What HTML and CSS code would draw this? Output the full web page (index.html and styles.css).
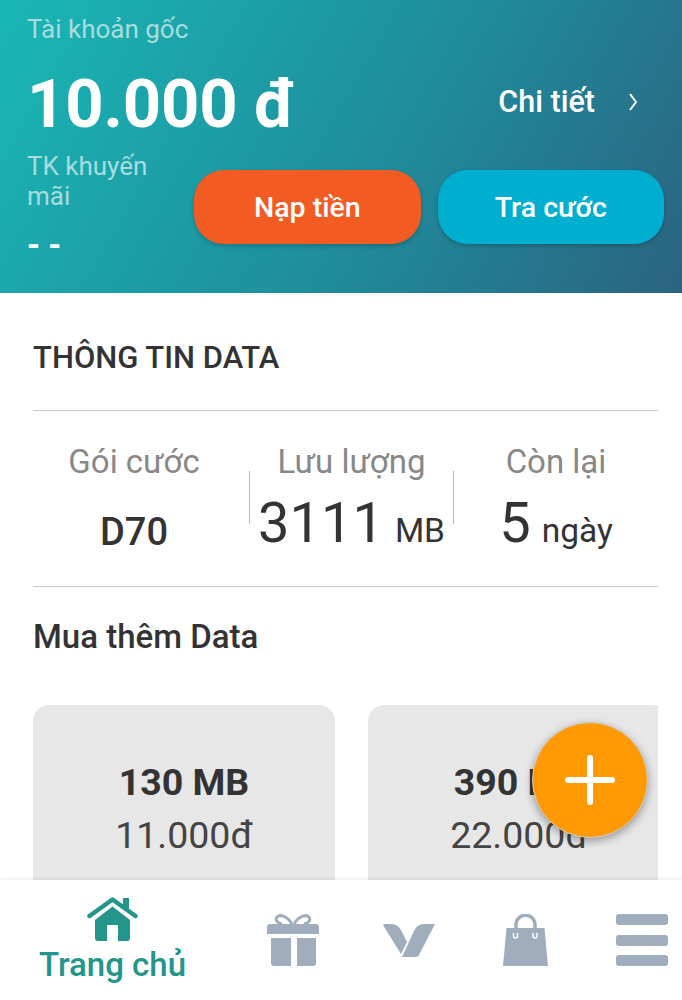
FILE: index.html

```html
<!DOCTYPE html>
<html lang="vi">
<head>
  <meta charset="UTF-8">
  <meta name="viewport" content="width=device-width, initial-scale=1">
  <title>Trang chủ</title>
  <link rel="stylesheet" href="styles.css">
</head>
<body>

  <div class="screen">
    <header class="account">
      <div class="account-label">Tài khoản gốc</div>
      <div class="balance-row">
        <div class="balance">10.000 đ</div>
        <a class="detail-link">
          <span>Chi tiết</span>
          <svg class="chevron" viewBox="0 0 10 20"><path d="M2 2 L8 10 L2 18"/></svg>
        </a>
      </div>
      <div class="promo-row">
        <div class="promo">
          <div class="account-label">TK khuyến mãi</div>
          <div class="promo-value">- -</div>
        </div>
        <button class="btn btn-topup">Nạp tiền</button>
        <button class="btn btn-check">Tra cước</button>
      </div>
    </header>

    <main class="content">
      <h2 class="section-title">THÔNG TIN DATA</h2>
      <div class="data-info">
        <div class="data-col data-col-first">
          <div class="data-label">Gói cước</div>
          <div class="data-value"><span class="plan">D70</span></div>
        </div>
        <div class="data-col data-col-mid">
          <div class="data-label">Lưu lượng</div>
          <div class="data-value"><span class="big">3111</span><span class="unit">MB</span></div>
        </div>
        <div class="data-col">
          <div class="data-label">Còn lại</div>
          <div class="data-value"><span class="big">5</span><span class="unit">ngày</span></div>
        </div>
      </div>

      <h3 class="buy-title">Mua thêm Data</h3>
      <div class="packs">
        <div class="pack">
          <div class="pack-size">130 MB</div>
          <div class="pack-price">11.000đ</div>
        </div>
        <div class="pack">
          <div class="pack-size">390 MB</div>
          <div class="pack-price">22.000đ</div>
        </div>
      </div>
    </main>

    <button class="fab" aria-label="Thêm">
      <svg viewBox="0 0 50 50"><path d="M25 3 V47 M3 25 H47"/></svg>
    </button>

    <nav class="tabbar">
      <a class="tab tab-active">
        <svg class="icon-home" viewBox="0 0 51 44">
          <path d="M36 1 H42 V13 L36 8 Z"/>
          <path d="M2.5 19 L25.5 2.5 L48.5 19" class="roof"/>
          <path d="M25.5 9.5 L43 23 V41 Q43 44 40 44 H31 V28 H20 V44 H11 Q8 44 8 41 V23 Z"/>
        </svg>
        <span>Trang chủ</span>
      </a>
      <a class="tab">
        <svg class="icon-gift" viewBox="0 0 52 52">
          <path d="M25 10 C20 2 13 0 10 3 C8 6 10 9 15 10 M27 10 C32 2 39 0 42 3 C44 6 42 9 37 10" class="ribbon"/>
          <path d="M3 10 H49 Q52 10 52 13 V20 H0 V13 Q0 10 3 10 Z"/>
          <path d="M4 24 H24 V52 H7 Q4 52 4 49 Z"/>
          <path d="M30 24 H49 V49 Q49 52 46 52 H30 Z"/>
        </svg>
      </a>
      <a class="tab">
        <svg class="icon-v" viewBox="0 0 52 34">
          <path d="M0 2 Q0 1 3 1 H8 C13 1 16 4 18 7 L24 19 L18 31 Z"/>
          <path d="M52 1 H41 C36 1 33 4 31 8 L19 34 H32 C35 34 36 33 37 30 Z"/>
        </svg>
      </a>
      <a class="tab">
        <svg class="icon-bag" viewBox="0 0 45 52">
          <path d="M13 15 V11 C13 -2 32 -2 32 11 V15" class="handle"/>
          <path d="M3.5 14 H41.5 L45 52 H0 Z"/>
          <path d="M10.5 19 v3 a2 2 0 0 0 4 0 v-3 M30 19 v3 a2 2 0 0 0 4 0 v-3" class="hook"/>
        </svg>
      </a>
      <a class="tab">
        <div class="menu-icon">
          <i></i><i></i><i></i>
        </div>
      </a>
    </nav>
  </div>

</body>
</html>
```

FILE: styles.css

```css
* {
  box-sizing: border-box;
}
body {
  margin: 0;
  font-family: Roboto, 'Noto Sans', sans-serif;
  color: #333;
  background: #fff;
}
.screen {
  position: relative;
  width: 682px;
  height: 1000px;
  display: flex;
  flex-direction: column;
  overflow: hidden;
}

/* account header */
.account {
  height: 293px;
  padding: 14px 18px 0 27px;
  background: linear-gradient(120deg, #19b7b5 0%, #1f8b9b 58%, #2b6382 100%);
  color: #fff;
}
.account-label {
  font-size: 26px;
  line-height: 30px;
  color: #a9dcdc;
}
.balance-row {
  display: flex;
  align-items: center;
  justify-content: space-between;
  height: 74px;
  margin-top: 23px;
}
.balance {
  font-size: 67px;
  font-weight: 700;
  letter-spacing: -0.2px;
  line-height: 74px;
}
.detail-link {
  display: flex;
  align-items: center;
  gap: 33px;
  margin: 0 26px 6px 0;
  font-size: 30.5px;
  font-weight: 500;
}
.chevron {
  width: 10px;
  height: 20px;
  margin-top: 2px;
  fill: none;
  stroke: #fff;
  stroke-width: 2;
}
.promo-row {
  display: flex;
  align-items: flex-start;
  margin-top: 10px;
}
.promo {
  width: 167px;
  flex: none;
}
.promo .account-label {
  width: 130px;
}
.promo-value {
  margin-top: 16px;
  font-size: 33px;
  font-weight: 700;
  line-height: 36px;
}
.btn {
  width: 227px;
  height: 74px;
  margin-top: 19px;
  border: none;
  border-radius: 30px;
  color: #fff;
  font-family: inherit;
  font-size: 28.5px;
  font-weight: 500;
  box-shadow: 0 2px 4px rgba(0, 0, 0, 0.2);
}
.btn-topup {
  background: #f25c22;
}
.btn-check {
  margin-left: 17px;
  background: #00afcf;
}

/* data info */
.content {
  flex: 1;
  padding: 0 24px 0 33px;
  overflow: hidden;
}
.section-title {
  height: 118px;
  margin: 0;
  padding-top: 47px;
  border-bottom: 1px solid #ccc;
  font-size: 31px;
  font-weight: 500;
  line-height: 36px;
}
.data-info {
  display: grid;
  grid-template-columns: 216px 205px 204px;
  height: 176px;
  border-bottom: 1px solid #ccc;
  text-align: center;
}
.data-col {
  position: relative;
  padding-top: 32px;
}
.data-col-first {
  padding-right: 14px;
}
.data-col-mid::before,
.data-col-mid::after {
  content: "";
  position: absolute;
  top: 60px;
  width: 1px;
  height: 53px;
  background: #bbb;
}
.data-col-mid::before {
  left: 0;
}
.data-col-mid::after {
  right: 0;
}
.data-label {
  font-size: 33px;
  line-height: 38px;
  color: #888;
}
.data-value {
  height: 68px;
  margin-top: 8px;
  line-height: 68px;
  white-space: nowrap;
}
.data-col-first .data-value {
  padding-top: 9px;
}
.plan {
  font-size: 38px;
  font-weight: 500;
}
.big {
  font-size: 56px;
}
.unit {
  margin-left: 11px;
  font-size: 33.5px;
}

/* packs */
.buy-title {
  margin: 32px 0 0;
  font-size: 33px;
  font-weight: 500;
  line-height: 36px;
}
.packs {
  display: flex;
  gap: 33px;
  margin-top: 50px;
  overflow: hidden;
}
.pack {
  flex: none;
  width: 302px;
  height: 200px;
  padding-top: 55px;
  border-radius: 16px 16px 0 0;
  background: #e7e7e7;
  text-align: center;
}
.pack-size {
  font-size: 37.5px;
  font-weight: 700;
  line-height: 44px;
}
.pack-price {
  font-size: 37.5px;
  line-height: 62px;
  color: #444;
}

/* floating button */
.fab {
  position: absolute;
  left: 532px;
  top: 722px;
  width: 116px;
  height: 116px;
  padding: 0;
  border: 1px solid #ccc;
  border-radius: 50%;
  background: #ff9a04;
  box-shadow: 0 3px 8px rgba(0, 0, 0, 0.35);
}
.fab svg {
  display: block;
  width: 50px;
  height: 50px;
  margin: auto;
  fill: none;
  stroke: #fff;
  stroke-width: 6;
  stroke-linecap: round;
}

/* bottom nav */
.tabbar {
  flex: none;
  display: grid;
  grid-template-columns: 235px 116px 116px 117px 115px;
  height: 120px;
  background: #fff;
  box-shadow: 0 -2px 4px rgba(0, 0, 0, 0.06);
}
.tab {
  display: flex;
  flex-direction: column;
  align-items: center;
  padding-top: 34px;
  fill: #9fadbc;
}
.tab-active {
  padding: 17px 10px 0 0;
  fill: #24958a;
  color: #22968a;
  font-size: 33px;
  font-weight: 500;
  line-height: 40px;
}
.tab-active span {
  margin-top: 4px;
}
.icon-home {
  width: 51px;
  height: 44px;
}
.icon-home .roof {
  fill: none;
  stroke: #24958a;
  stroke-width: 4.5;
  stroke-linecap: round;
  stroke-linejoin: round;
}
.icon-gift {
  width: 52px;
  height: 52px;
}
.icon-gift .ribbon {
  fill: none;
  stroke: #9fadbc;
  stroke-width: 3;
}
.icon-v {
  width: 52px;
  height: 34px;
  margin-top: 9px;
}
.icon-bag {
  width: 45px;
  height: 52px;
}
.icon-bag .handle {
  fill: none;
  stroke: #9fadbc;
  stroke-width: 3.5;
}
.icon-bag .hook {
  fill: none;
  stroke: #fff;
  stroke-width: 1.5;
}
.menu-icon {
  display: flex;
  flex-direction: column;
  gap: 9.5px;
  width: 52px;
}
.menu-icon i {
  display: block;
  height: 11px;
  border-radius: 3px;
  background: #9fadbc;
}
```
